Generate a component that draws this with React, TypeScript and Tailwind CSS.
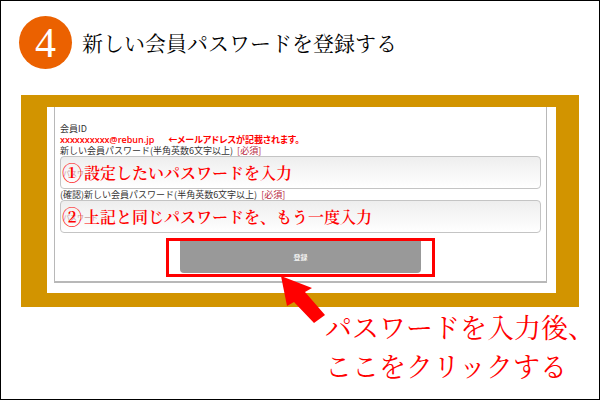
type PasswordFieldProps = {
  id: string;
  label: string;
  note: string;
  step: string;
};

function PasswordField({ id, label, note, step }: PasswordFieldProps) {
  return (
    <div>
      <label
        htmlFor={id}
        className="flex h-[11px] gap-1 text-[9px] leading-[11px] whitespace-nowrap text-[#333333]"
      >
        {label}
        <span className="text-[#b8283c]">[必須]</span>
      </label>
      <div className="relative">
        <input
          id={id}
          type="password"
          placeholder="パスワード"
          className="block h-[33px] w-full rounded border border-[#c4c4c4] bg-linear-to-b from-[#eeeeee] to-white px-0.5 text-[7px] placeholder:text-[#c9a0a0]"
        />
        {/* note laid over the field */}
        <p className="pointer-events-none absolute inset-y-0 left-0.5 flex items-center gap-0.5 whitespace-nowrap font-['Noto_Serif_CJK_JP','Noto_Sans_CJK_JP',serif] text-base font-semibold text-[#ff0000]">
          <span className="text-xl">{step}</span>
          <span>{note}</span>
        </p>
      </div>
    </div>
  );
}

export default function App() {
  return (
    <main className="min-h-screen border border-black bg-white px-5 pt-[15px] font-['Noto_Sans_CJK_JP',sans-serif]">
      <header className="flex items-center gap-2.5">
        <span className="-ml-0.5 flex size-[53px] items-center justify-center rounded-full bg-[#eb6100] font-['Liberation_Serif',serif] text-[42px] leading-none text-white">
          4
        </span>
        <h1 className="font-['Noto_Serif_CJK_JP','Noto_Sans_CJK_JP',serif] text-[21px] font-normal text-black">
          新しい会員パスワードを登録する
        </h1>
      </header>

      <section className="relative mt-[26px] border-t-12 border-r-23 border-b-14 border-l-26 border-[#d29400] bg-white pr-[9px] pb-[10px] pl-[7px]">
        <form
          onSubmit={(e) => e.preventDefault()}
          className="border-x border-b-2 border-[#b8b8b8] px-[5px] pt-4 pb-1"
        >
          <p className="h-[11px] text-[9px] leading-[11px] text-[#333333]">会員ID</p>
          <p className="flex h-[11px] gap-3.5 text-[9px] leading-[11px] font-bold text-[#ff0000]">
            <span className="font-['Open_Sans','Noto_Sans_CJK_JP',sans-serif] font-semibold">xxxxxxxxxx@rebun.jp</span>
            <span className="[font-feature-settings:'palt']">←メールアドレスが記載されます。</span>
          </p>
          <PasswordField
            id="password"
            label="新しい会員パスワード(半角英数6文字以上)"
            note="設定したいパスワードを入力"
            step="①"
          />
          <PasswordField
            id="password-confirm"
            label="(確認)新しい会員パスワード(半角英数6文字以上)"
            note="上記と同じパスワードを、もう一度入力"
            step="②"
          />
          <div className="mx-auto mt-[5px] w-14/25 border-3 border-[#ff0000] px-[11px] pb-px">
            <button
              type="submit"
              className="block h-8 w-full rounded-b bg-[#999999] text-[7px] font-medium text-white"
            >
              登録
            </button>
          </div>
        </form>

        <svg viewBox="0 0 45 48" className="absolute top-[169px] left-[234px] h-12 w-[45px]" aria-hidden="true">
          <path d="M0 0 31 12 24 16 44 39 33 47 13 26 6 30Z" fill="#ff0000" />
        </svg>
      </section>

      <p className="flex justify-end font-['Noto_Serif_CJK_JP','Noto_Sans_CJK_JP',serif] text-[27px] leading-[39px] font-normal text-[#ff0000]">
        <span className="-mr-4 w-[270px] whitespace-nowrap">
          パスワードを入力後、
          <br />
          ここをクリックする
        </span>
      </p>
    </main>
  );
}
